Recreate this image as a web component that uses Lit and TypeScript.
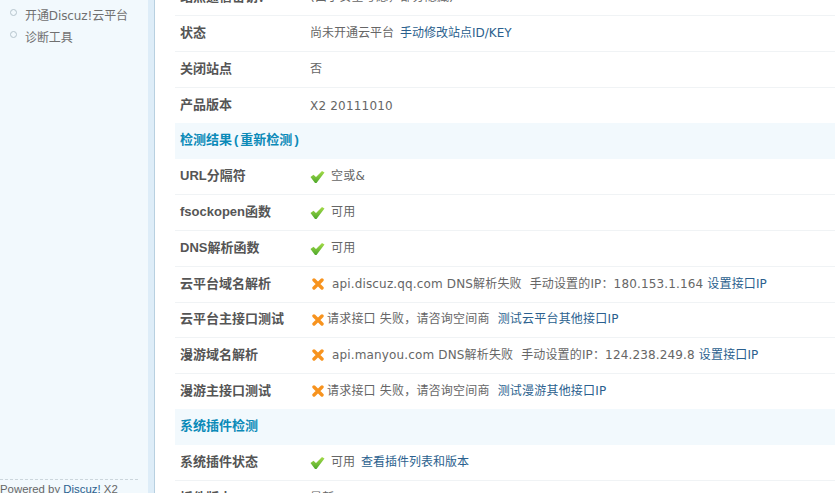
import { LitElement, html, css } from "lit";
import { customElement } from "lit/decorators.js";

const check = html`<svg class="ico" viewBox="0 0 15 14" aria-hidden="true">
  <defs><linearGradient id="g" x1="0" y1="0" x2="0" y2="1"><stop offset="0" stop-color="#a5dc48"/><stop offset="1" stop-color="#4ea82c"/></linearGradient></defs>
  <path d="M0.5 7 L3.5 4.8 L6 7 L12 1 L14.5 2.6 L6.5 13 L5 13 Z" fill="url(#g)"/></svg>`;
const cross = html`<svg class="ico x" viewBox="0 0 12 12" aria-hidden="true">
  <path d="M2 2 L10 10 M10 2 L2 10" stroke="#f7931e" stroke-width="3.4" stroke-linecap="round" fill="none"/></svg>`;

type Row = { label: unknown; head?: boolean; value?: unknown; cls?: string; rowCls?: string };

const rows: Row[] = [
  { label: "站点通信密钥：", value: "(由于安全考虑，部分隐藏)" },
  { label: "状态", cls: "tight", value: html`尚未开通云平台<a class="gap">手动修改站点ID/KEY</a>` },
  { label: "关闭站点", value: "否" },
  { label: "产品版本", value: "X2 20111010", cls: "low", rowCls: "short" },
  { label: html`检测结果<span class="par">(</span>重新检测<span class="par">)</span>`, head: true },
  { label: "URL分隔符", value: html`${check}<span class="t">空或&amp;</span>` },
  { label: "fsockopen函数", value: html`${check}<span class="t">可用</span>` },
  { label: "DNS解析函数", value: html`${check}<span class="t">可用</span>` },
  { label: "云平台域名解析", value: html`${cross}<span class="u">api.discuz.qq.com DNS解析失败&nbsp; 手动设置的IP：180.153.1.164 <a>设置接口IP</a></span>` },
  { label: "云平台主接口测试", rowCls: "short keep", value: html`${cross}<span class="v">请求接口 失败，请咨询空间商<a class="gap">测试云平台其他接口IP</a></span>` },
  { label: "漫游域名解析", value: html`${cross}<span class="u">api.manyou.com DNS解析失败&nbsp; 手动设置的IP：124.238.249.8 <a>设置接口IP</a></span>` },
  { label: "漫游主接口测试", rowCls: "short", value: html`${cross}<span class="v">请求接口 失败，请咨询空间商<a class="gap">测试漫游其他接口IP</a></span>` },
  { label: "系统插件检测", head: true },
  { label: "系统插件状态", cls: "tight", value: html`${check}<span class="t">可用<a class="gap">查看插件列表和版本</a></span>` },
  { label: "插件版本", value: "最新" },
];

@customElement("app-root")
export class AppRoot extends LitElement {
  static styles = css`
    :host { display: block; width: 835px; height: 493px; overflow: hidden; background: #fff;
      font: 12px "DejaVu Sans", "Noto Sans CJK SC", sans-serif; color: #666; }
    .page { display: flex; height: 493px; overflow: hidden; }
    .side { width: 148px; flex: none; background: #f2f9fd; display: flex; flex-direction: column; overflow: hidden; }
    .nav { flex: 1; list-style: none; margin: 0; padding: 3px 0 0 10px; }
    .nav li { display: flex; align-items: center; height: 22.5px; color: #707070; letter-spacing: -0.1px; }
    .dot { width: 5px; height: 5px; border: 1px solid #b5c4cc; border-radius: 50%; background: #f2f9fd; margin-right: 8px; margin-top: -4px; }
    .foot { flex: none; height: 14px; box-sizing: border-box; margin-right: 10px; border-top: 1px dashed #ccd6dc; font: 11.4px/19px "Liberation Sans", sans-serif; white-space: nowrap; color: #666; }
    .foot a { color: #2b5f8e; }
    .rail { width: 7px; flex: none; background: #deedf8; border-right: 1px solid #b8d0e0; box-sizing: border-box; }
    .main { flex: 1; min-width: 0; padding-left: 20px; overflow: hidden; }
    .tbl { margin-top: -20px; }
    .row { display: flex; align-items: center; height: 36px; box-sizing: border-box; padding-bottom: 5px; border-bottom: 1px solid #f0f3f5; white-space: nowrap; }
    .short { height: 35px; border-bottom: none; }
    .short.keep { border-bottom: 1px solid #f0f3f5; }
    .lab { width: 135px; flex: none; padding-left: 5px; box-sizing: border-box; font: 700 13px "Liberation Sans", "Noto Sans CJK SC", sans-serif; color: #555; }
    .val { display: flex; align-items: center; color: #666; letter-spacing: 0.2px; }
    .val.tight { letter-spacing: 0; }
    .head { background: #f2f9fd; border-bottom: none; }
    .head .lab { color: #0b8ab8; width: auto; }
    .par { margin: 0 2px; }
    .low { padding-top: 5px; }
    a { color: #2b5f8e; text-decoration: none; }
    .gap { margin-left: 8px; }
    .tight .gap { margin-left: 6px; }
    .ico { width: 15px; height: 14px; flex: none; margin-top: 6px; }
    .ico.x { width: 12px; height: 12px; margin-left: 2px; margin-top: 4px; }
    .t { margin-left: 6px; }
    .u { margin-left: 8px; letter-spacing: 0.15px; }
    .v { margin-left: 3px; }
  `;

  render() {
    return html`<div class="page">
      <aside class="side">
        <ul class="nav">
          <li><span class="dot"></span>开通Discuz!云平台</li>
          <li><span class="dot"></span>诊断工具</li>
        </ul>
        <div class="foot">Powered by <a>Discuz!</a> X2</div>
      </aside>
      <div class="rail"></div>
      <main class="main">
        <div class="tbl">
          ${rows.map(r => html`<div class="row ${r.head ? "head" : ""} ${r.rowCls ?? ""}">
            <div class="lab">${r.label}</div>
            ${r.head ? "" : html`<div class="val ${r.cls ?? ""}">${r.value}</div>`}
          </div>`)}
        </div>
      </main>
    </div>`;
  }
}
